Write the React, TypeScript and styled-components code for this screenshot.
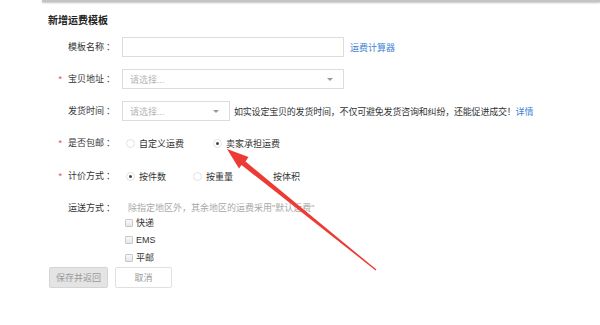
import React from "react";
import styled, { createGlobalStyle } from "styled-components";

const GlobalStyle = createGlobalStyle`
  body {
    margin: 0;
    background: #fff;
    font-family: "Liberation Sans", "Noto Sans CJK SC", sans-serif;
    color: #333;
  }
`;

const Page = styled.div`
  position: relative;
  width: 600px;
  height: 325px;
  overflow: hidden;
  background: #fff;
`;

const TopEdge = styled.div`
  height: 2px;
  margin-left: 42px;
  background: #c4c4c4;
  box-shadow: 0 1px 2px rgba(0, 0, 0, 0.25);
`;

const Form = styled.div`
  padding: 12px 0 0 48px;
  display: flex;
  flex-direction: column;
`;

const Title = styled.h3`
  margin: 0 0 9px;
  font-size: 10px;
  line-height: 14px;
  font-weight: bold;
  color: #222;
`;

const Row = styled.div<{ $gap?: number }>`
  display: flex;
  align-items: center;
  min-height: 20px;
  margin-bottom: ${(p) => (p.$gap ?? 12)}px;
`;

const Label = styled.label`
  width: 67px;
  flex-shrink: 0;
  margin-right: 7px;
  text-align: right;
  font-size: 9px;
  line-height: 20px;
  color: #333;
  white-space: nowrap;
`;

const Star = styled.span`
  color: #e5484d;
  margin-right: 6px;
`;

const Colon = styled.span`
  margin-left: 2px;
`;

const Input = styled.div<{ $w: number }>`
  box-sizing: border-box;
  width: ${(p) => p.$w}px;
  height: 20px;
  border: 1px solid #dcdcdc;
  background: #fff;
  display: flex;
  align-items: center;
  justify-content: space-between;
  padding: 0 10px 0 7px;
  font-size: 9px;
  color: #b5b5b5;
`;

const Caret = styled.span`
  width: 0;
  height: 0;
  border-left: 3px solid transparent;
  border-right: 3px solid transparent;
  border-top: 3px solid #999;
`;

const Link = styled.a<{ $inline?: boolean }>`
  margin-left: ${(p) => (p.$inline ? 0 : 6)}px;
  font-size: 9px;
  color: #3d82d6;
  text-decoration: none;
`;

const Help = styled.span`
  margin-left: 4px;
  font-size: 9px;
  letter-spacing: -0.2px;
  color: #333;
  white-space: nowrap;
`;

const Options = styled.div`
  display: flex;
  align-items: center;
  padding-left: 4px;
`;

const Option = styled.span<{ $w: number }>`
  display: inline-flex;
  align-items: center;
  width: ${(p) => p.$w}px;
  font-size: 9px;
  color: #333;
`;

const Radio = styled.span<{ $on?: boolean; $faint?: boolean }>`
  box-sizing: border-box;
  width: 9px;
  height: 9px;
  margin-right: 4px;
  border-radius: 50%;
  border: 1px solid ${(p) => (p.$faint ? "#f4f4f4" : "#e2e2e2")};
  background: #fff;
  display: inline-flex;
  align-items: center;
  justify-content: center;
  &::after {
    content: "";
    width: 3px;
    height: 3px;
    border-radius: 50%;
    background: ${(p) => (p.$on ? "#444" : "transparent")};
  }
`;

const Hint = styled.div`
  font-size: 9px;
  color: #a8a8a8;
  padding-left: 6px;
  line-height: 14px;
`;

const Checks = styled.div`
  display: flex;
  flex-direction: column;
  padding-left: 77px;
  margin-top: -4px;
`;

const Check = styled.label`
  display: flex;
  align-items: center;
  height: 17.5px;
  font-size: 9px;
  color: #333;
`;

const Box = styled.span`
  box-sizing: border-box;
  width: 8px;
  height: 8px;
  margin-right: 3px;
  border: 1px solid #c8c8c8;
  background: linear-gradient(#fafafa, #e6e6e6);
  border-radius: 1px;
`;

const Buttons = styled.div`
  display: flex;
  gap: 7px;
  margin-top: 0;
  padding-left: 1px;
`;

const Button = styled.button<{ $primary?: boolean }>`
  box-sizing: border-box;
  height: 21px;
  width: ${(p) => (p.$primary ? 59 : 57)}px;
  padding: 0;
  border: 1px solid ${(p) => (p.$primary ? "#d4d4d4" : "#e0e0e0")};
  border-radius: 2px;
  background: ${(p) => (p.$primary ? "#e4e4e4" : "#fff")};
  color: ${(p) => (p.$primary ? "#9a9a9a" : "#999")};
  font-family: inherit;
  font-size: 9px;
`;

const Overlay = styled.svg`
  position: absolute;
  left: 0;
  top: 0;
  pointer-events: none;
`;

export default function App() {
  return (
    <Page>
      <GlobalStyle />
      <TopEdge />
      <Form>
        <Title>新增运费模板</Title>

        <Row>
          <Label>
            模板名称<Colon>：</Colon>
          </Label>
          <Input $w={222} />
          <Link href="#">运费计算器</Link>
        </Row>

        <Row>
          <Label>
            <Star>*</Star>宝贝地址<Colon>：</Colon>
          </Label>
          <Input $w={222}>
            请选择...
            <Caret />
          </Input>
        </Row>

        <Row>
          <Label>
            发货时间<Colon>：</Colon>
          </Label>
          <Input $w={108}>
            请选择...
            <Caret />
          </Input>
          <Help>
            如实设定宝贝的发货时间，不仅可避免发货咨询和纠纷，还能促进成交！<Link as="span" $inline>详情</Link>
          </Help>
        </Row>

        <Row $gap={13}>
          <Label>
            <Star>*</Star>是否包邮<Colon>：</Colon>
          </Label>
          <Options>
            <Option $w={87}>
              <Radio />
              自定义运费
            </Option>
            <Option $w={70}>
              <Radio $on />
              卖家承担运费
            </Option>
          </Options>
        </Row>

        <Row $gap={12}>
          <Label>
            <Star>*</Star>计价方式<Colon>：</Colon>
          </Label>
          <Options>
            <Option $w={67}>
              <Radio $on />
              按件数
            </Option>
            <Option $w={67}>
              <Radio />
              按重量
            </Option>
            <Option $w={50}>
              <Radio $faint />
              按体积
            </Option>
          </Options>
        </Row>

        <Row $gap={0}>
          <Label>
            运送方式<Colon>：</Colon>
          </Label>
          <Hint>除指定地区外，其余地区的运费采用"默认运费"</Hint>
        </Row>

        <Checks>
          <Check>
            <Box />
            快递
          </Check>
          <Check>
            <Box />
            EMS
          </Check>
          <Check>
            <Box />
            平邮
          </Check>
        </Checks>

        <Buttons>
          <Button $primary>保存并返回</Button>
          <Button>取消</Button>
        </Buttons>
      </Form>

      <Overlay width="600" height="325" viewBox="0 0 600 325">
        <polygon
          points="227,149 248.5,157 245.5,161.5 376.4,269.6 375.6,270.4 241.5,165 239,168.5"
          fill="#ee3a34"
        />
      </Overlay>
    </Page>
  );
}
